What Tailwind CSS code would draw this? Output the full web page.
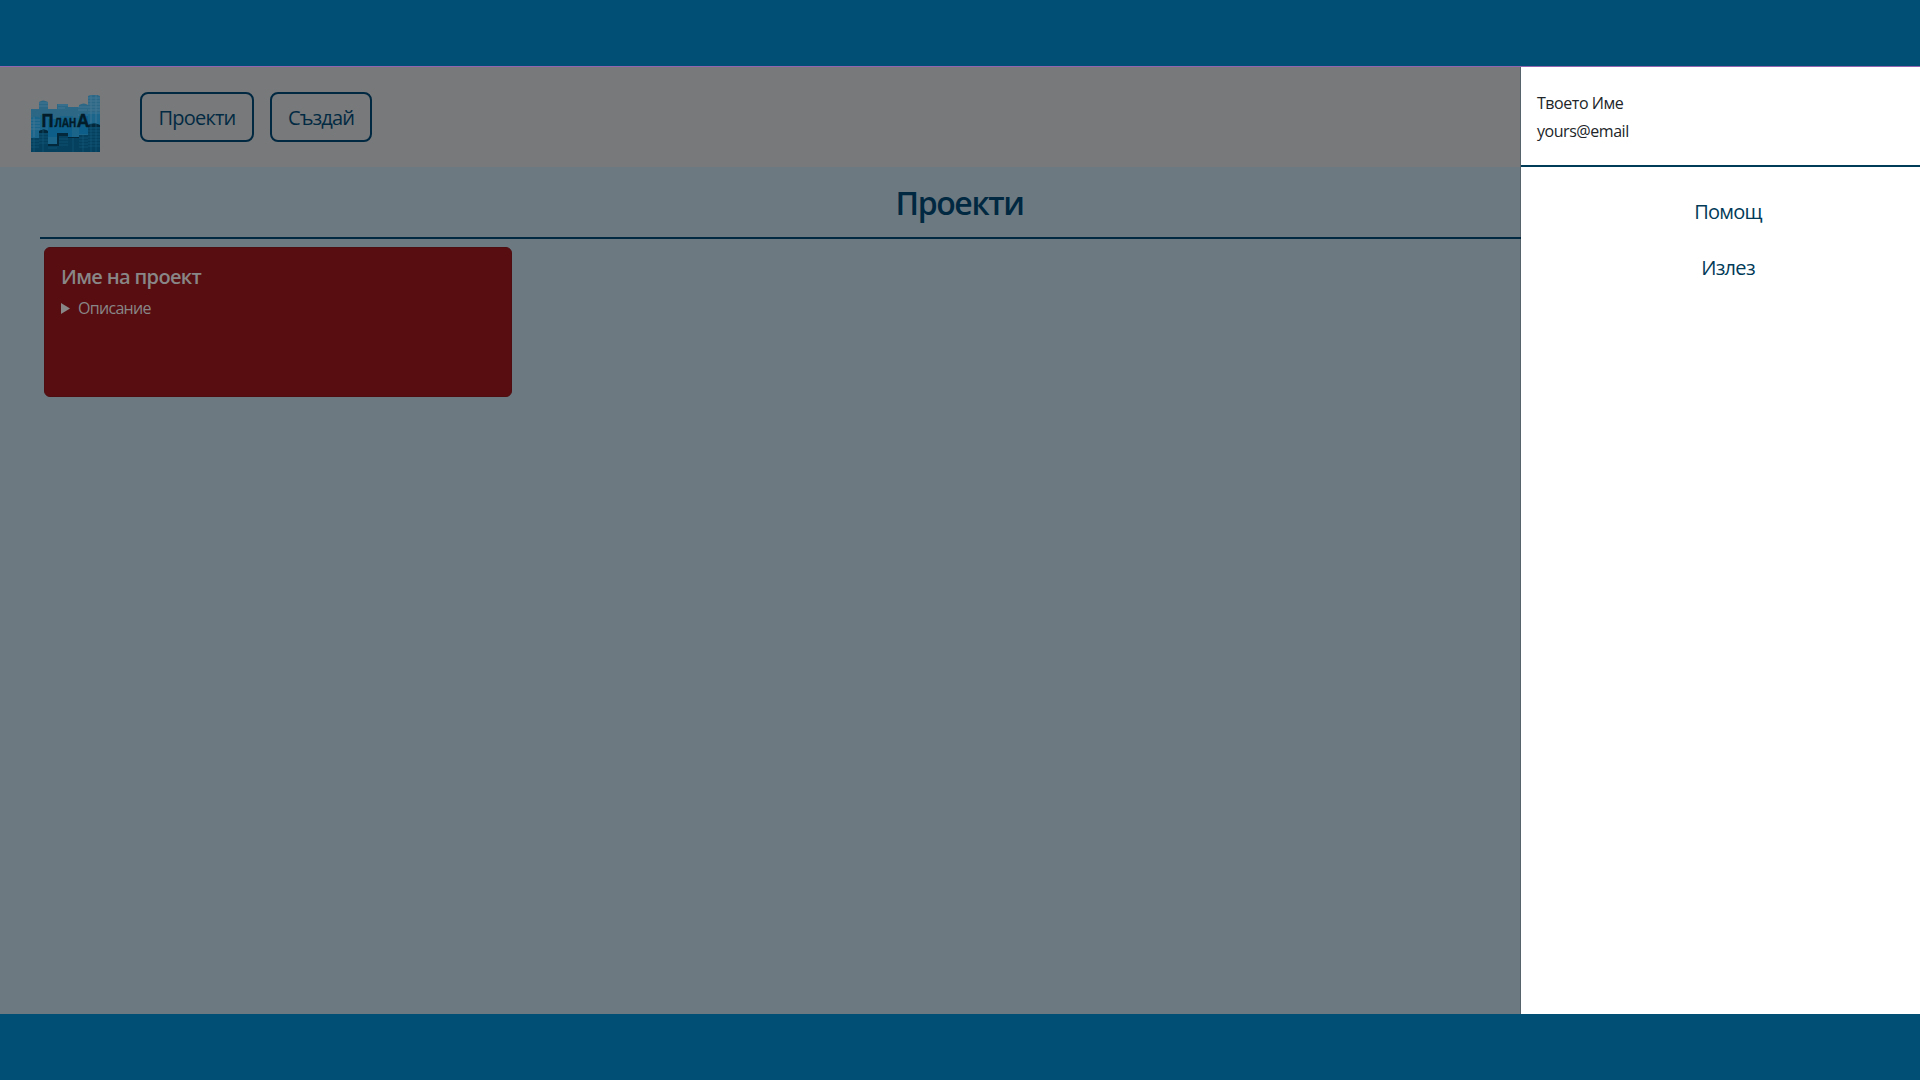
<!DOCTYPE html>
<html lang="bg">
<head>
<meta charset="utf-8">
<title>ПланА</title>
<script src="https://cdn.jsdelivr.net/npm/@tailwindcss/browser@4"></script>
</head>
<body class="flex h-screen flex-col overflow-hidden bg-[#024f75] pt-[66px] pb-[66px] font-['Open_Sans','Noto_Sans',sans-serif]">
<div class="flex min-h-0 flex-1 border-t border-[#9165af]">
  <div class="relative w-[1520px] shrink-0 bg-[#6c7980]">
    <header class="flex h-[100px] items-center bg-[#78797a] pl-[31px]">
      <svg class="mt-[13px] h-[57px] w-[69px]" viewBox="0 0 69 57" aria-label="ПланА">
        <path fill="#2c6886" d="M0 14h8V7q4-3 9 0v7h9V9h11v3h11v-2q5-3 9 0V1q6-3 12 0v56H0z"/>
        <path fill="#1c658a" d="M0 23q5-3 9 0v-3h13v4h7v-3h13v2h15v-6h12v40H0z"/>
        <path fill="#0d5f8a" d="M17 24h24v18H17zM48 19h9v20h-9z"/>
        <path stroke="#4a7d97" stroke-width=".7" fill="none" d="M8 8h9M8 11h9M27 10h10M27 13h7M47 12h10M47 15h9M57 3h12M57 6h12M57 9h12M57 12h12M57 15h12M57 18h12M60 0v28M65 0v28M0 25h9M0 28h9M0 31h9M0 34h9M3 22v20M47 20h10"/>
        <path fill="#05405f" d="M0 43h8v-7q5-3 9 0v13h9V38h11v4h11v-2h9V30q6-3 12 0v27H0z"/>
        <path fill="#03283b" d="M17 49h9V38h11v3H28v10H17zM8 36q5-3 9 0v2H8zM57 30q6-3 12 0v2H57zM37 42h11v1H37z"/>
        <path stroke="#15597a" stroke-width=".7" fill="none" d="M0 46h8M0 49h8M0 52h8M3 43v14M8 39h9M8 42h9M8 45h9M8 48h9M12 35v22M28 44h9M28 47h9M28 50h9M17 53h9M42 43v14M48 43h9M48 46h9M48 49h9M48 52h9M52 40v17M57 33h12M57 36h12M57 39h12M57 42h12M57 45h12M57 48h12M57 51h12M60 29v28M65 29v28"/>
        <text y="32" fill="#031c29" stroke="#031c29" stroke-width=".3" font-family="Open Sans" font-weight="700" font-size="18"><tspan x="10" textLength="13" lengthAdjust="spacingAndGlyphs">П</tspan><tspan x="23.5" font-size="12" textLength="22" lengthAdjust="spacingAndGlyphs">ЛАН</tspan><tspan x="46" textLength="12" lengthAdjust="spacingAndGlyphs">А</tspan></text>
      </svg>
      <nav class="ml-10 flex gap-4 text-xl leading-[30px] text-[#022a43]">
        <a class="flex h-[50px] w-[114px] items-center justify-center rounded-lg border-2 border-[#002841] pt-0.5 tracking-[-0.8px]">Проекти</a>
        <a class="flex h-[50px] w-[102px] items-center justify-center rounded-lg border-2 border-[#002841] pt-0.5 tracking-[-0.9px]">Създай</a>
      </nav>
    </header>
    <main class="pl-10">
      <h1 class="h-[70px] w-[1840px] pt-[12px] pr-px text-center text-[32px] leading-[48px] font-semibold tracking-[-1.4px] text-[#002841]">Проекти</h1>
      <div class="-mr-px border-t-2 border-[#002841]"></div>
      <section class="mt-2 ml-1 h-[150px] w-[468px] rounded-md border border-[#4e0d10] bg-[#580e11] px-4 pt-[17px] text-[#898687]">
        <h2 class="text-xl leading-6 font-semibold tracking-[-0.65px]">Име на проект</h2>
        <p class="mt-[7px] flex items-center text-base leading-6 tracking-[-0.7px]"><svg class="mr-2 h-[11px] w-[9px]" viewBox="0 0 9 11" fill="currentColor"><path d="M0 0l9 5.5L0 11z"/></svg><span>Описание</span></p>
      </section>
    </main>
  </div>
  <aside class="min-w-0 flex-1 border-l border-[#56636b] bg-white">
    <div class="h-[100px] border-b-2 border-[#003b58] pt-[22px] pl-4 text-base leading-7 tracking-[-0.45px] text-[#212529]">
      <p>Твоето Име</p>
      <p>yours@email</p>
    </div>
    <nav class="flex flex-col items-center gap-[26px] pt-[30px] pl-[15px] text-xl leading-[30px] tracking-[-0.7px] text-[#023b58]">
      <a>Помощ</a>
      <a>Излез</a>
    </nav>
  </aside>
</div>
</body>
</html>
